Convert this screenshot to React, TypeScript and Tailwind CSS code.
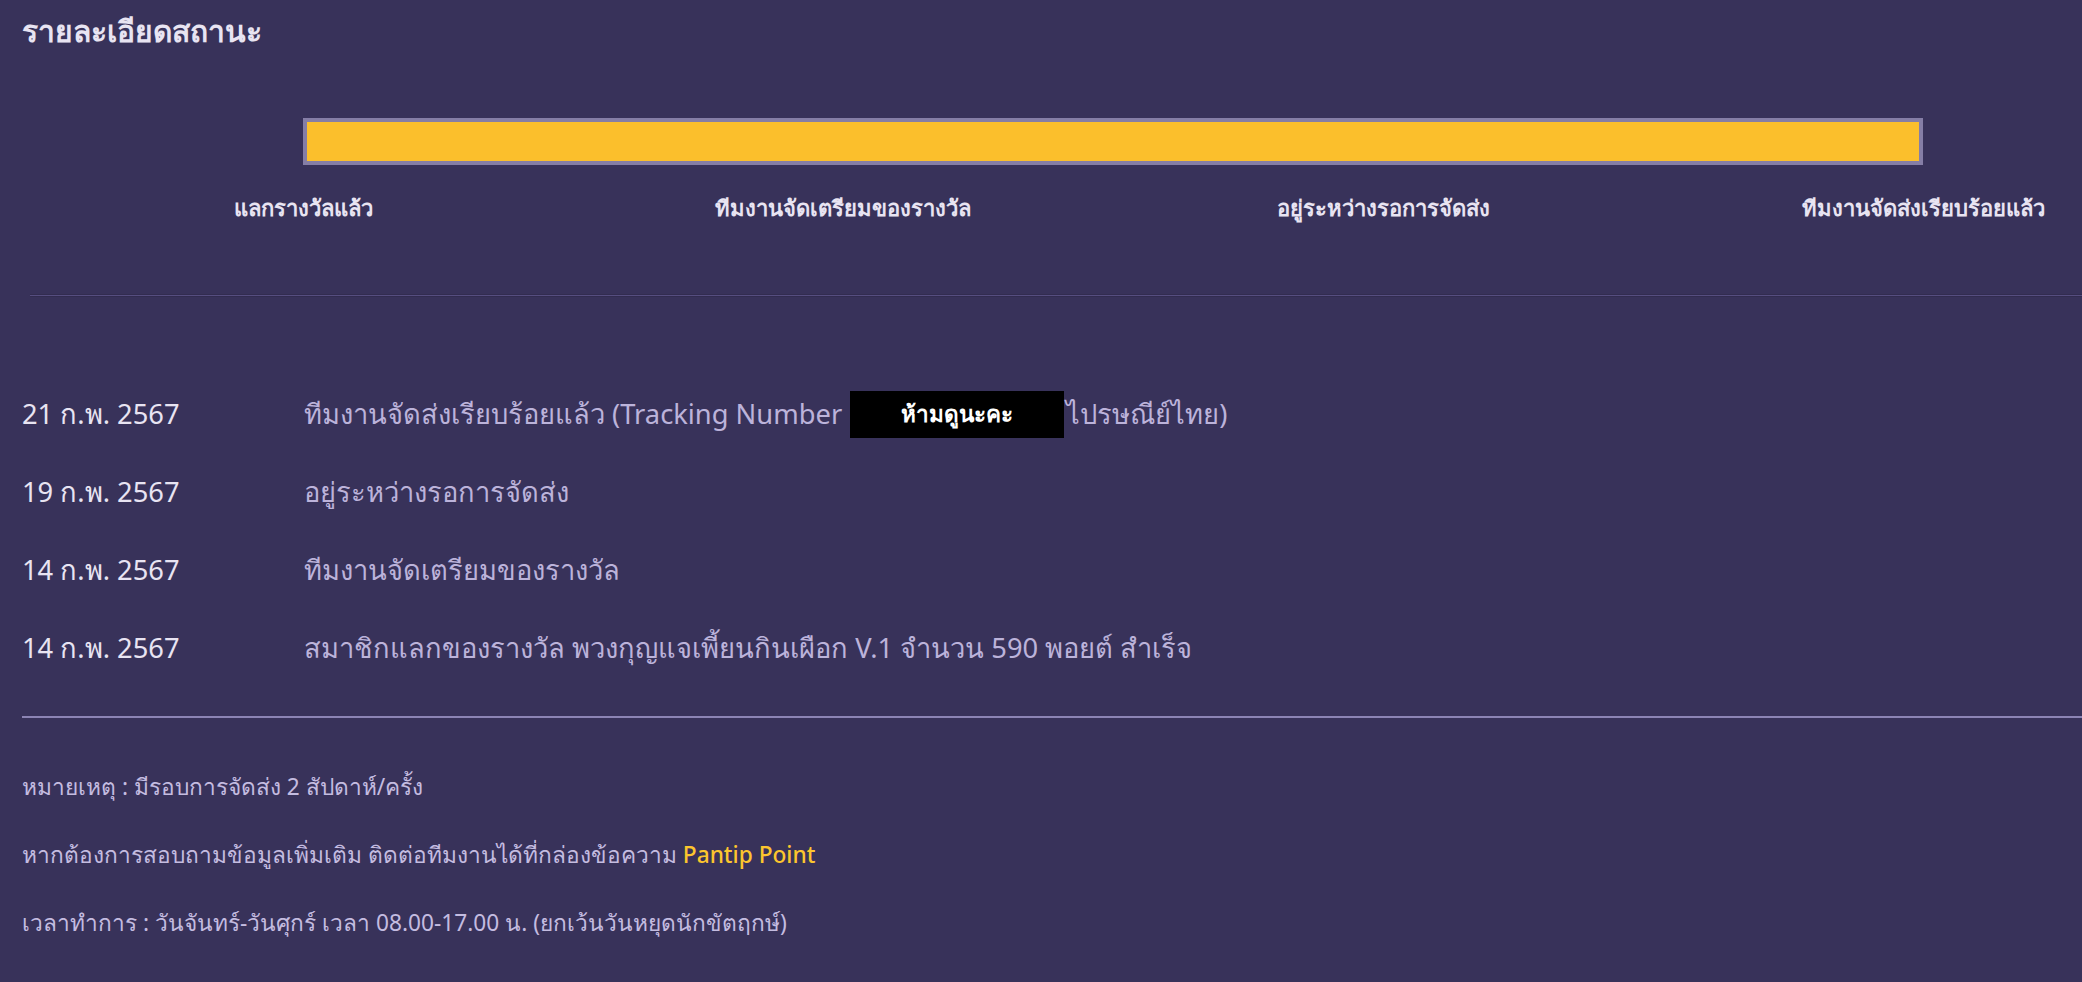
import React from "react";

const steps = [
  "แลกรางวัลแล้ว",
  "ทีมงานจัดเตรียมของรางวัล",
  "อยู่ระหว่างรอการจัดส่ง",
  "ทีมงานจัดส่งเรียบร้อยแล้ว",
];

const history = [
  { date: "21 ก.พ. 2567", text: "tracking" },
  { date: "19 ก.พ. 2567", text: "อยู่ระหว่างรอการจัดส่ง" },
  { date: "14 ก.พ. 2567", text: "ทีมงานจัดเตรียมของรางวัล" },
  { date: "14 ก.พ. 2567", text: "สมาชิกแลกของรางวัล พวงกุญแจเพี้ยนกินเผือก V.1 จำนวน 590 พอยต์ สำเร็จ" },
];

export default function App() {
  return (
    <div
      className="w-[2082px] h-[982px] overflow-hidden bg-[#38325a] text-[#e8e4f2]"
      style={{ fontFamily: '"Noto Sans", Roboto, sans-serif' }}
    >
      {/* Title */}
      <h1 className="pl-[22px] pt-[10px] text-[30px] font-bold leading-[42px]">รายละเอียดสถานะ</h1>

      {/* Progress */}
      <div className="mt-[66px] ml-[303px] w-[1620px] h-[47px] border-[4px] border-[#857ea6] bg-[#fbbf2c]" />
      <div className="flex ml-[33px] mt-[26px]">
        {steps.map((s) => (
          <div key={s} className="w-[540px] shrink-0 text-center text-[22px] font-bold leading-[32px]">
            {s}
          </div>
        ))}
      </div>

      <div className="ml-[30px] mt-[71px] h-[3px] bg-[#564e80] border-y border-[#322c50]" />

      {/* History */}
      <div className="pl-[22px] mt-[78px]">
        {history.map((h, i) => (
          <div key={i} className="flex items-center h-[78px] text-[27.3px]">
            <div className="w-[282px] shrink-0 text-[#e8e4f2]">{h.date}</div>
            <div className="flex items-center text-[#bcb3da]">
              {h.text === "tracking" ? (
                <>
                  <span>ทีมงานจัดส่งเรียบร้อยแล้ว (Tracking Number</span>
                  <span className="ml-[8px] mr-[2px] w-[214px] h-[47px] bg-black text-white font-bold text-[22.5px] flex items-center justify-center">
                    ห้ามดูนะคะ
                  </span>
                  <span>ไปรษณีย์ไทย)</span>
                </>
              ) : (
                <span>{h.text}</span>
              )}
            </div>
          </div>
        ))}
      </div>

      <div className="ml-[22px] mt-[29px] h-[2px] bg-[#8c84b4]" />

      {/* Notes */}
      <div className="pl-[22px] pt-[52px] text-[22.7px] text-[#c4bce0] flex flex-col gap-[34px] leading-[34px]">
        <p>หมายเหตุ : มีรอบการจัดส่ง 2 สัปดาห์/ครั้ง</p>
        <p>
          หากต้องการสอบถามข้อมูลเพิ่มเติม ติดต่อทีมงานได้ที่กล่องข้อความ{" "}
          <span className="text-[#fcc52e] font-medium">Pantip Point</span>
        </p>
        <p>เวลาทำการ : วันจันทร์-วันศุกร์ เวลา 08.00-17.00 น. (ยกเว้นวันหยุดนักขัตฤกษ์)</p>
      </div>
    </div>
  );
}
